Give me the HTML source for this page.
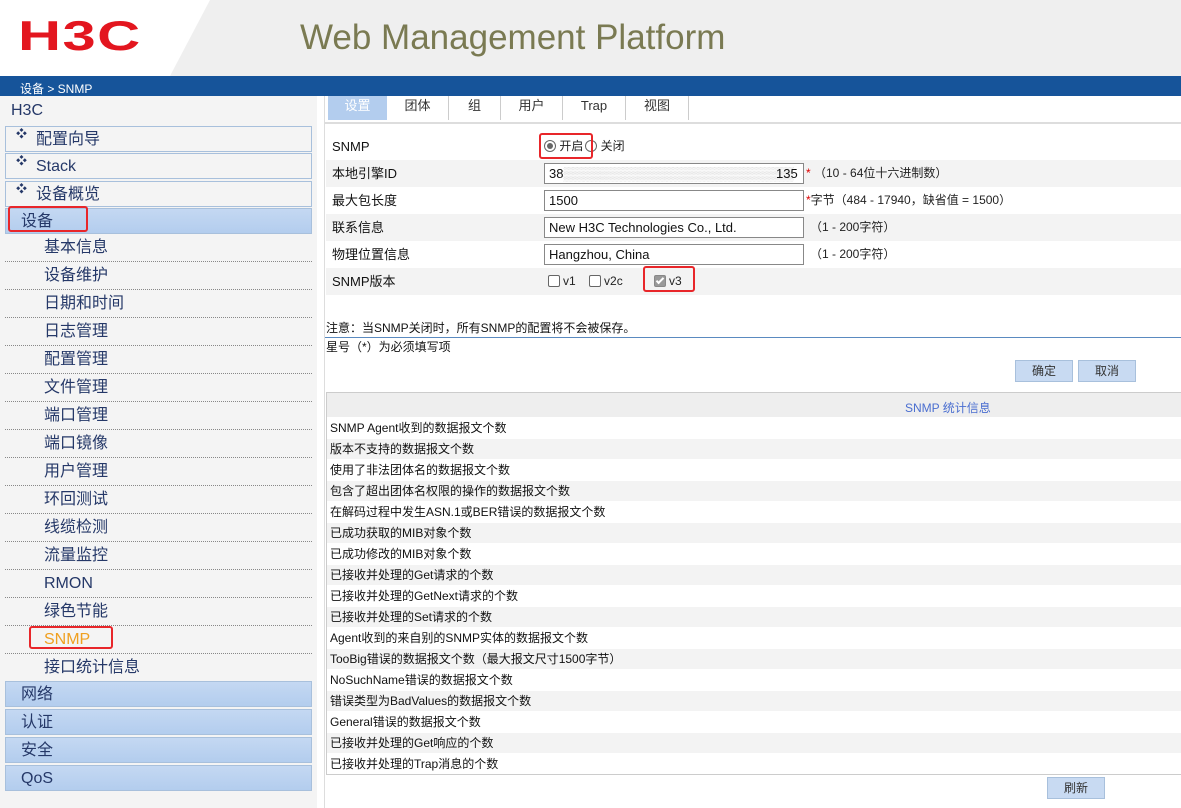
<!DOCTYPE html>
<html><head><meta charset="utf-8"><style>
*{margin:0;padding:0;box-sizing:border-box}
body{width:1181px;height:808px;overflow:hidden;background:#fff;font-family:"Liberation Sans","Noto Sans CJK SC",sans-serif;position:relative}
.hdr{position:absolute;left:0;top:0;width:1181px;height:76px;background:#efefef}
.hdr .wb{position:absolute;left:0;top:0;width:170px;height:76px;background:#fff}
.logo{position:absolute;left:18px;top:15px;font:bold 42px/42px "Liberation Sans",sans-serif;color:#e3161f;letter-spacing:1px;transform:scaleX(1.42);transform-origin:left}
.title{position:absolute;left:300px;top:18px;font-size:35px;line-height:40px;color:#7a7a52}
.bar{position:absolute;left:0;top:76px;width:1181px;height:20px;background:#16549a;color:#fff;font-size:12px;line-height:26px;padding-left:20px}
.side{position:absolute;left:0;top:96px;width:317px;height:712px;background:#f4f4f4}
.side .h{position:absolute;left:11px;top:4px;font-size:16px;line-height:22px;color:#253868}
.box{position:absolute;left:5px;width:307px;height:26px;border:1px solid #a8c0dc;background:#f4f4f4;color:#253868;font-size:16px;line-height:26px;padding-left:30px}
.box .d{position:absolute;left:10px;top:-6px;font-size:11px}
.blue{background:linear-gradient(#c4d8f2,#b3cdee);padding-left:15px}
.sub{position:absolute;left:5px;width:307px;height:28px;border-bottom:1px dotted #888;color:#253868;font-size:16px;line-height:28px;padding-left:39px}
.red{position:absolute;border:2px solid #e8262a;border-radius:3px}
.main{position:absolute;left:324px;top:96px;width:857px;height:712px;background:#fff;border-left:1px solid #ddd}
.tab{position:absolute;top:0;height:24px;font-size:13px;line-height:20px;color:#333;text-align:center;border-right:1px solid #ccc}
.row{position:absolute;left:1px;width:856px;height:27px;font-size:13px;line-height:27px;color:#111;padding-left:6px}
.g{background:#f3f3f3}
.inp{position:absolute;left:218px;top:3px;width:260px;height:21px;border:1px solid #888;background:#fff;font-size:13px;line-height:19px;padding:0 4px;white-space:nowrap;overflow:hidden}
.hint{position:absolute;font-size:12px;color:#222;top:0;line-height:27px}
.btn{position:absolute;height:22px;width:58px;background:#c8daf2;border:1px solid #a8c0dc;font-size:12px;line-height:20px;color:#333;text-align:center}
.tbl{position:absolute;left:1px;top:296px;width:856px;border:1px solid #ccc;border-right:none}
.tr{height:21px;font-size:12px;line-height:20px;color:#111;padding-left:3px;border-top:1px solid #fff}
.tr:nth-child(odd){background:#f3f3f3}
.th{height:24px;background:#eee;color:#4a6ed0;font-size:12px;line-height:30px;padding-left:578px}
.cb{display:inline-block;width:12px;height:12px;border:1px solid #666;background:#fff;vertical-align:-2px;margin-right:3px;border-radius:2px;position:relative}
.rd{display:inline-block;width:12px;height:12px;border:1px solid #666;border-radius:50%;background:#fff;vertical-align:-2px;position:relative}
</style></head><body>
<div class="hdr"><div class="wb"></div><div style="position:absolute;left:170px;top:0;width:0;height:0;border-top:76px solid #fff;border-right:40px solid transparent"></div>
<div class="logo">H3C</div><div class="title">Web Management Platform</div></div>
<div class="bar">设备 &gt; SNMP</div>
<div class="side">
<div class="h">H3C</div>
<div class="box" style="top:30px"><span class="d">❖</span>配置向导</div>
<div class="box" style="top:57px"><span class="d">❖</span>Stack</div>
<div class="box" style="top:85px"><span class="d">❖</span>设备概览</div>
<div class="box blue" style="top:112px">设备</div>
<div class="red" style="left:8px;top:110px;width:80px;height:26px"></div>
<div class="sub" style="top:138px">基本信息</div>
<div class="sub" style="top:166px">设备维护</div>
<div class="sub" style="top:194px">日期和时间</div>
<div class="sub" style="top:222px">日志管理</div>
<div class="sub" style="top:250px">配置管理</div>
<div class="sub" style="top:278px">文件管理</div>
<div class="sub" style="top:306px">端口管理</div>
<div class="sub" style="top:334px">端口镜像</div>
<div class="sub" style="top:362px">用户管理</div>
<div class="sub" style="top:390px">环回测试</div>
<div class="sub" style="top:418px">线缆检测</div>
<div class="sub" style="top:446px">流量监控</div>
<div class="sub" style="top:474px">RMON</div>
<div class="sub" style="top:502px">绿色节能</div>
<div class="sub" style="top:530px;color:#f0a020">SNMP</div>
<div class="red" style="left:29px;top:530px;width:84px;height:23px"></div>
<div class="sub" style="top:558px">接口统计信息</div>
<div class="box blue" style="top:585px">网络</div>
<div class="box blue" style="top:613px">认证</div>
<div class="box blue" style="top:641px">安全</div>
<div class="box blue" style="top:669px">QoS</div>
</div>
<div class="main">
<div class="tab" style="left:3px;width:59px;background:#b3cdee;color:#fff;border:none">设置</div>
<div class="tab" style="left:62px;width:62px">团体</div>
<div class="tab" style="left:124px;width:52px">组</div>
<div class="tab" style="left:176px;width:62px">用户</div>
<div class="tab" style="left:238px;width:63px">Trap</div>
<div class="tab" style="left:301px;width:63px">视图</div>
<div style="position:absolute;left:0;top:26px;width:857px;height:2px;background:#ddd"></div>
<div class="row" style="top:37px">SNMP<span class="hint" style="left:218px"><span class="rd"><span style="position:absolute;left:2px;top:2px;width:6px;height:6px;border-radius:50%;background:#666"></span></span> 开启<span class="rd" style="margin-left:2px"></span> 关闭</span></div>
<div class="red" style="left:214px;top:37px;width:54px;height:26px"></div>
<div class="row g" style="top:64px">本地引擎ID<div class="inp" style="color:#111">38<span style="color:#ccc">▒▒▒▒▒▒▒▒▒▒▒▒▒▒▒▒▒▒▒▒▒▒▒▒▒</span></div><span style="position:absolute;left:450px;top:0;font-size:13px">135</span><span class="hint" style="left:480px"><span style="color:#d00">*</span> （10 - 64位十六进制数）</span></div>
<div class="row" style="top:91px">最大包长度<div class="inp">1500</div><span class="hint" style="left:480px"><span style="color:#d00">*</span>字节（484 - 17940，缺省值 = 1500）</span></div>
<div class="row g" style="top:118px">联系信息<div class="inp">New H3C Technologies Co., Ltd.</div><span class="hint" style="left:484px">（1 - 200字符）</span></div>
<div class="row" style="top:145px">物理位置信息<div class="inp">Hangzhou, China</div><span class="hint" style="left:484px">（1 - 200字符）</span></div>
<div class="row g" style="top:172px">SNMP版本<span class="hint" style="left:222px"><span class="cb"></span>v1 &nbsp;&nbsp;&nbsp;<span class="cb"></span>v2c</span><span class="hint" style="left:328px"><span class="cb" style="background:#999;border-color:#888"><span style="position:absolute;left:3px;top:0px;width:4px;height:8px;border:solid #fff;border-width:0 2px 2px 0;transform:rotate(45deg)"></span></span>v3</span></div>
<div class="red" style="left:318px;top:170px;width:52px;height:26px"></div>
<div style="position:absolute;left:1px;top:224px;font-size:12px;line-height:16px;color:#111">注意：当SNMP关闭时，所有SNMP的配置将不会被保存。</div>
<div style="position:absolute;left:0;top:241px;width:857px;height:1px;background:#5a8ac0"></div>
<div style="position:absolute;left:1px;top:243px;font-size:12px;line-height:16px;color:#111">星号（*）为必须填写项</div>
<div class="btn" style="left:690px;top:264px">确定</div>
<div class="btn" style="left:753px;top:264px">取消</div>
<div class="tbl">
<div class="th">SNMP 统计信息</div>
<div class="tr">SNMP Agent收到的数据报文个数</div>
<div class="tr">版本不支持的数据报文个数</div>
<div class="tr">使用了非法团体名的数据报文个数</div>
<div class="tr">包含了超出团体名权限的操作的数据报文个数</div>
<div class="tr">在解码过程中发生ASN.1或BER错误的数据报文个数</div>
<div class="tr">已成功获取的MIB对象个数</div>
<div class="tr">已成功修改的MIB对象个数</div>
<div class="tr">已接收并处理的Get请求的个数</div>
<div class="tr">已接收并处理的GetNext请求的个数</div>
<div class="tr">已接收并处理的Set请求的个数</div>
<div class="tr">Agent收到的来自别的SNMP实体的数据报文个数</div>
<div class="tr">TooBig错误的数据报文个数（最大报文尺寸1500字节）</div>
<div class="tr">NoSuchName错误的数据报文个数</div>
<div class="tr">错误类型为BadValues的数据报文个数</div>
<div class="tr">General错误的数据报文个数</div>
<div class="tr">已接收并处理的Get响应的个数</div>
<div class="tr">已接收并处理的Trap消息的个数</div>
</div>
<div class="btn" style="left:722px;top:681px">刷新</div>
</div>
</body></html>
